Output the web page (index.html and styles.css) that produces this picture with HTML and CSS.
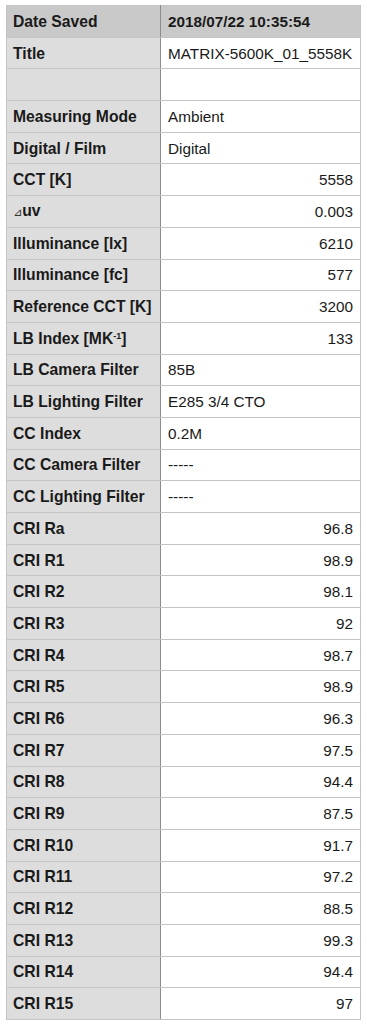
FILE: index.html
```html
<!DOCTYPE html>
<html>
<head>
<meta charset="utf-8">
<link rel="stylesheet" href="styles.css">
</head>
<body>
<table class="data">
<tbody>
<tr class="head"><th>Date Saved</th><td>2018/07/22 10:35:54</td></tr>
<tr><th>Title</th><td>MATRIX-5600K_01_5558K</td></tr>
<tr><th></th><td></td></tr>
<tr><th>Measuring Mode</th><td>Ambient</td></tr>
<tr><th>Digital / Film</th><td>Digital</td></tr>
<tr><th>CCT [K]</th><td class="num">5558</td></tr>
<tr><th><span class="tri">⊿</span>uv</th><td class="num">0.003</td></tr>
<tr><th>Illuminance [lx]</th><td class="num">6210</td></tr>
<tr><th>Illuminance [fc]</th><td class="num">577</td></tr>
<tr><th>Reference CCT [K]</th><td class="num">3200</td></tr>
<tr><th>LB Index [MK<sup>-1</sup>]</th><td class="num">133</td></tr>
<tr><th>LB Camera Filter</th><td>85B</td></tr>
<tr><th>LB Lighting Filter</th><td>E285 3/4 CTO</td></tr>
<tr><th>CC Index</th><td>0.2M</td></tr>
<tr><th>CC Camera Filter</th><td>-----</td></tr>
<tr><th>CC Lighting Filter</th><td>-----</td></tr>
<tr><th>CRI Ra</th><td class="num">96.8</td></tr>
<tr><th>CRI R1</th><td class="num">98.9</td></tr>
<tr><th>CRI R2</th><td class="num">98.1</td></tr>
<tr><th>CRI R3</th><td class="num">92</td></tr>
<tr><th>CRI R4</th><td class="num">98.7</td></tr>
<tr><th>CRI R5</th><td class="num">98.9</td></tr>
<tr><th>CRI R6</th><td class="num">96.3</td></tr>
<tr><th>CRI R7</th><td class="num">97.5</td></tr>
<tr><th>CRI R8</th><td class="num">94.4</td></tr>
<tr><th>CRI R9</th><td class="num">87.5</td></tr>
<tr><th>CRI R10</th><td class="num">91.7</td></tr>
<tr><th>CRI R11</th><td class="num">97.2</td></tr>
<tr><th>CRI R12</th><td class="num">88.5</td></tr>
<tr><th>CRI R13</th><td class="num">99.3</td></tr>
<tr><th>CRI R14</th><td class="num">94.4</td></tr>
<tr><th>CRI R15</th><td class="num">97</td></tr>
</tbody>
</table>
</body>
</html>
```
FILE: styles.css
```css
html, body {
  margin: 0;
  padding: 0;
  background: #ffffff;
}
body {
  padding: 5px 6px 0 6px;
  font-family: "Liberation Sans", Arial, sans-serif;
  font-size: 15.3px;
  color: #1a1a1a;
}
.data {
  width: 355px;
  border-collapse: collapse;
  table-layout: fixed;
}
.data tr {
  height: 31.7px;
}
.data th, .data td {
  border: 1px solid #c4c4c4;
  padding: 1px 7px 0 7px;
  vertical-align: middle;
  white-space: nowrap;
  line-height: 18px;
}
.data th {
  width: 140px;
  padding-left: 6px;
  text-align: left;
  font-weight: bold;
  font-size: 15.7px;
  background: #dddddd;
  border-right: 1px solid #8c8c8c;
}
.data td {
  background: #ffffff;
  text-align: left;
}
.data td.num {
  text-align: right;
}
.data tr.head th, .data tr.head td {
  background: #c9c9c9;
  font-weight: bold;
  font-size: 15.7px;
}
.data tr.head td {
  font-size: 15.3px;
}
.tri {
  font-family: "DejaVu Sans", sans-serif;
  font-weight: normal;
  font-size: 11px;
  color: #333;
}
sup {
  font-size: 9px;
  line-height: 0;
  vertical-align: 5px;
}
```
